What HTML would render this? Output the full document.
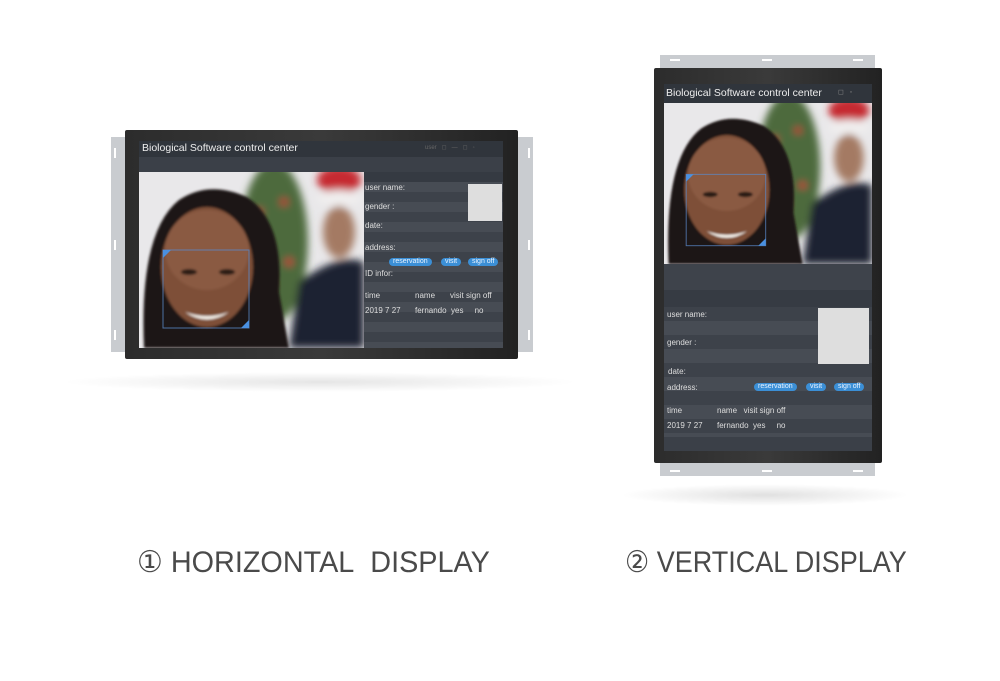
<!DOCTYPE html>
<html><head><meta charset="utf-8"><style>
*{margin:0;padding:0;box-sizing:border-box}
body{width:1000px;height:681px;background:#fff;position:relative;overflow:hidden;font-family:"Liberation Sans",sans-serif}
.a{position:absolute}
.t{position:absolute;color:#dedede;font-size:8px;white-space:nowrap;line-height:1}
.btn{position:absolute;background:#3b8fd6;color:#e9f3ff;font-size:7px;border-radius:5px;line-height:8px;padding:0 4px;white-space:nowrap}
.cap{position:absolute;top:545px;font-size:30px;color:#4a4a4a;white-space:nowrap;transform-origin:0 0;line-height:36px}
.stripe{background:repeating-linear-gradient(#3d424a 0 10px,#474c54 10px 20px)}
</style></head><body>

<svg width="0" height="0" style="position:absolute"><defs>
<filter id="bl" x="-20%" y="-20%" width="140%" height="140%"><feGaussianBlur stdDeviation="4"/></filter>
<filter id="bl2"><feGaussianBlur stdDeviation="1.2"/></filter>
<g id="photo">
<rect width="225" height="176" fill="#e9e8ea"/>
<g filter="url(#bl)">
<ellipse cx="135" cy="70" rx="34" ry="80" fill="#4d6a3e"/>
<circle cx="120" cy="40" r="4" fill="#b8313a"/><circle cx="150" cy="90" r="4" fill="#c9303a"/><circle cx="130" cy="110" r="5" fill="#c8a050"/><circle cx="145" cy="30" r="4" fill="#c03038"/><circle cx="125" cy="75" r="4" fill="#d8c090"/>
<ellipse cx="200" cy="8" rx="22" ry="14" fill="#c62a30"/>
<ellipse cx="200" cy="26" rx="22" ry="8" fill="#f0eeee"/>
<ellipse cx="200" cy="60" rx="16" ry="26" fill="#a47a64"/>
<path d="M160 110 Q200 80 225 90 L225 176 L150 176Z" fill="#1e2230"/>
</g>
<g filter="url(#bl2)">
<path d="M5 176 Q0 60 40 28 Q70 8 108 25 Q145 50 140 120 L150 176Z" fill="#1f1612"/>
<ellipse cx="68" cy="95" rx="46" ry="60" fill="#7e5039"/>
<ellipse cx="68" cy="78" rx="42" ry="40" fill="#8a5a42"/>
<path d="M46 140 Q68 155 90 140 Q68 148 46 140Z" fill="#f2eee8"/>
<ellipse cx="50" cy="100" rx="8" ry="3" fill="#2a1a14"/><ellipse cx="88" cy="100" rx="8" ry="3" fill="#2a1a14"/>
</g>
<rect x="24" y="78" width="86" height="78" fill="none" stroke="#5a88c8" stroke-width="1" opacity=".8"/>
<path d="M24 78h8l-8 8z" fill="#4a90e0"/><path d="M110 156h-8l8-8z" fill="#4a90e0"/>
</g>
</defs></svg>

<div class="a" style="left:60px;top:372px;width:520px;height:20px;border-radius:50%;background:radial-gradient(ellipse at center,rgba(0,0,0,.1),rgba(0,0,0,0) 70%)"></div>
<div class="a" style="left:111px;top:137px;width:20px;height:215px;background:#c9ccd0"></div>
<div class="a" style="left:513px;top:137px;width:20px;height:215px;background:#c9ccd0"></div>
<div class="a" style="left:114px;top:148px;width:2px;height:10px;background:#fff"></div>
<div class="a" style="left:114px;top:240px;width:2px;height:10px;background:#fff"></div>
<div class="a" style="left:114px;top:330px;width:2px;height:10px;background:#fff"></div>
<div class="a" style="left:528px;top:148px;width:2px;height:10px;background:#fff"></div>
<div class="a" style="left:528px;top:240px;width:2px;height:10px;background:#fff"></div>
<div class="a" style="left:528px;top:330px;width:2px;height:10px;background:#fff"></div>
<div class="a" style="left:125px;top:130px;width:393px;height:229px;background:linear-gradient(90deg,#2c2c2c,#3a3a3a 50%,#222);border-radius:2px"></div>
<div class="a" style="left:139px;top:141px;width:364px;height:207px;background:#3b4048"></div>
<div class="a" style="left:139px;top:141px;width:364px;height:16px;background:#30353c"></div>
<div class="t" style="left:142px;top:143px;font-size:10.5px;color:#eee">Biological Software control center</div>
<div class="t" style="left:425px;top:145px;font-size:6px;color:#666">user &nbsp; ◻ &nbsp; — &nbsp; ◻ &nbsp; ◦</div>
<svg class="a" style="left:139px;top:172px" width="225" height="176" viewBox="0 0 225 176"><use href="#photo"/></svg>
<div class="a stripe" style="left:364px;top:172px;width:139px;height:176px"></div>
<div class="a" style="left:364px;top:172px;width:139px;height:10px;background:#353a42"></div>
<div class="a" style="left:468px;top:184px;width:34px;height:37px;background:#dedede"></div>
<div class="t" style="left:365px;top:184px">user name:</div>
<div class="t" style="left:365px;top:203px">gender :</div>
<div class="t" style="left:365px;top:222px">date:</div>
<div class="t" style="left:365px;top:244px">address:</div>
<div class="btn" style="left:389px;top:258px">reservation</div>
<div class="btn" style="left:441px;top:258px">visit</div>
<div class="btn" style="left:468px;top:258px">sign off</div>
<div class="t" style="left:365px;top:270px">ID infor:</div>
<div class="t" style="left:365px;top:292px">time</div>
<div class="t" style="left:415px;top:292px">name</div>
<div class="t" style="left:450px;top:292px">visit sign off</div>
<div class="t" style="left:365px;top:307px">2019 7 27</div>
<div class="t" style="left:415px;top:307px">fernando &nbsp;yes &nbsp; &nbsp; no</div>

<div class="a" style="left:620px;top:484px;width:290px;height:22px;border-radius:50%;background:radial-gradient(ellipse at center,rgba(0,0,0,.12),rgba(0,0,0,0) 70%)"></div>
<div class="a" style="left:660px;top:55px;width:215px;height:18px;background:#c9ccd0"></div>
<div class="a" style="left:660px;top:458px;width:215px;height:18px;background:#c9ccd0"></div>
<div class="a" style="left:670px;top:59px;width:10px;height:2px;background:#fff"></div>
<div class="a" style="left:762px;top:59px;width:10px;height:2px;background:#fff"></div>
<div class="a" style="left:853px;top:59px;width:10px;height:2px;background:#fff"></div>
<div class="a" style="left:670px;top:470px;width:10px;height:2px;background:#fff"></div>
<div class="a" style="left:762px;top:470px;width:10px;height:2px;background:#fff"></div>
<div class="a" style="left:853px;top:470px;width:10px;height:2px;background:#fff"></div>
<div class="a" style="left:654px;top:68px;width:228px;height:395px;background:linear-gradient(90deg,#2c2c2c,#3a3a3a 50%,#222);border-radius:2px"></div>
<div class="a" style="left:664px;top:84px;width:208px;height:367px;background:#3b4048"></div>
<div class="a" style="left:664px;top:84px;width:208px;height:19px;background:#30353c"></div>
<div class="t" style="left:666px;top:88px;font-size:10.5px;color:#eee">Biological Software control center</div>
<div class="t" style="left:838px;top:89px;font-size:7px;color:#888">◻ &nbsp; ◦</div>
<svg class="a" style="left:664px;top:103px" width="208" height="161" viewBox="0 0 225 176" preserveAspectRatio="none"><use href="#photo"/></svg>
<div class="a" style="left:664px;top:264px;width:208px;height:26px;background:#3e434b"></div>
<div class="a" style="left:664px;top:290px;width:208px;height:17px;background:#363b43"></div>
<div class="a stripe" style="left:664px;top:307px;width:208px;height:130px;background:repeating-linear-gradient(#3d424a 0 14px,#474c54 14px 28px)"></div>
<div class="a" style="left:818px;top:308px;width:51px;height:56px;background:#dedede"></div>
<div class="t" style="left:667px;top:311px">user name:</div>
<div class="t" style="left:667px;top:339px">gender :</div>
<div class="t" style="left:668px;top:368px">date:</div>
<div class="t" style="left:667px;top:384px">address:</div>
<div class="btn" style="left:754px;top:383px">reservation</div>
<div class="btn" style="left:806px;top:383px">visit</div>
<div class="btn" style="left:834px;top:383px">sign off</div>
<div class="t" style="left:667px;top:407px">time</div>
<div class="t" style="left:717px;top:407px">name &nbsp; visit sign off</div>
<div class="t" style="left:667px;top:422px">2019 7 27</div>
<div class="t" style="left:717px;top:422px">fernando &nbsp;yes &nbsp; &nbsp; no</div>

<div class="cap" style="left:137px;transform:scaleX(0.96)">① HORIZONTAL&nbsp; DISPLAY</div>
<div class="cap" style="left:625px;transform:scaleX(0.9)">② VERTICAL DISPLAY</div>
</body></html>
